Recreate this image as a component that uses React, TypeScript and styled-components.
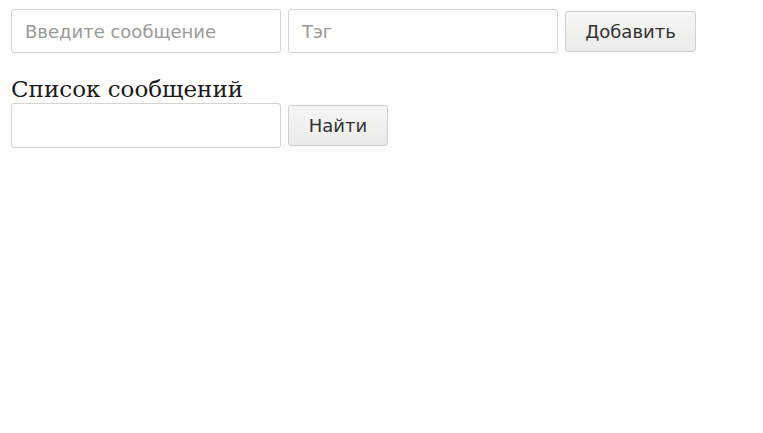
import React from "react";
import styled, { createGlobalStyle } from "styled-components";

const Global = createGlobalStyle`
  html, body { margin: 0; padding: 0; background: #fdfdfb; }
  body { font-family: "DejaVu Sans", sans-serif; }
`;

const Page = styled.div`
  padding: 9px 11px;
  display: flex;
  flex-direction: column;
`;

const Row = styled.div`
  display: flex;
  align-items: center;
  gap: 7px;
`;

const Input = styled.input<{ $h?: number }>`
  box-sizing: border-box;
  width: 270px;
  height: ${(p) => p.$h ?? 44}px;
  border: 1px solid #d4d4d0;
  border-radius: 3px;
  background: #fdfdfb;
  padding: 0 13px;
  font-family: "DejaVu Sans", sans-serif;
  font-size: 18px;
  color: #333;
  outline: none;
  &::placeholder { color: #9a9a98; }
`;

const Button = styled.button<{ $w: number }>`
  box-sizing: border-box;
  width: ${(p) => p.$w}px;
  height: 41px;
  border: 1px solid #cfcfcc;
  border-radius: 3px;
  background: linear-gradient(#f6f6f4, #ebebe9);
  font-family: "DejaVu Sans", sans-serif;
  font-size: 18px;
  color: #333;
  padding: 0;
`;

const Title = styled.h2`
  margin: 22px 0 0;
  font-family: "DejaVu Serif", serif;
  font-weight: normal;
  font-size: 23px;
  line-height: 28px;
  color: #1a1a1a;
`;

export default function App() {
  return (
    <>
      <Global />
      <Page>
        <Row>
          <Input placeholder="Введите сообщение" />
          <Input placeholder="Тэг" />
          <Button $w={131}>Добавить</Button>
        </Row>
        <Title>Список сообщений</Title>
        <Row>
          <Input $h={45} />
          <Button $w={100}>Найти</Button>
        </Row>
      </Page>
    </>
  );
}
